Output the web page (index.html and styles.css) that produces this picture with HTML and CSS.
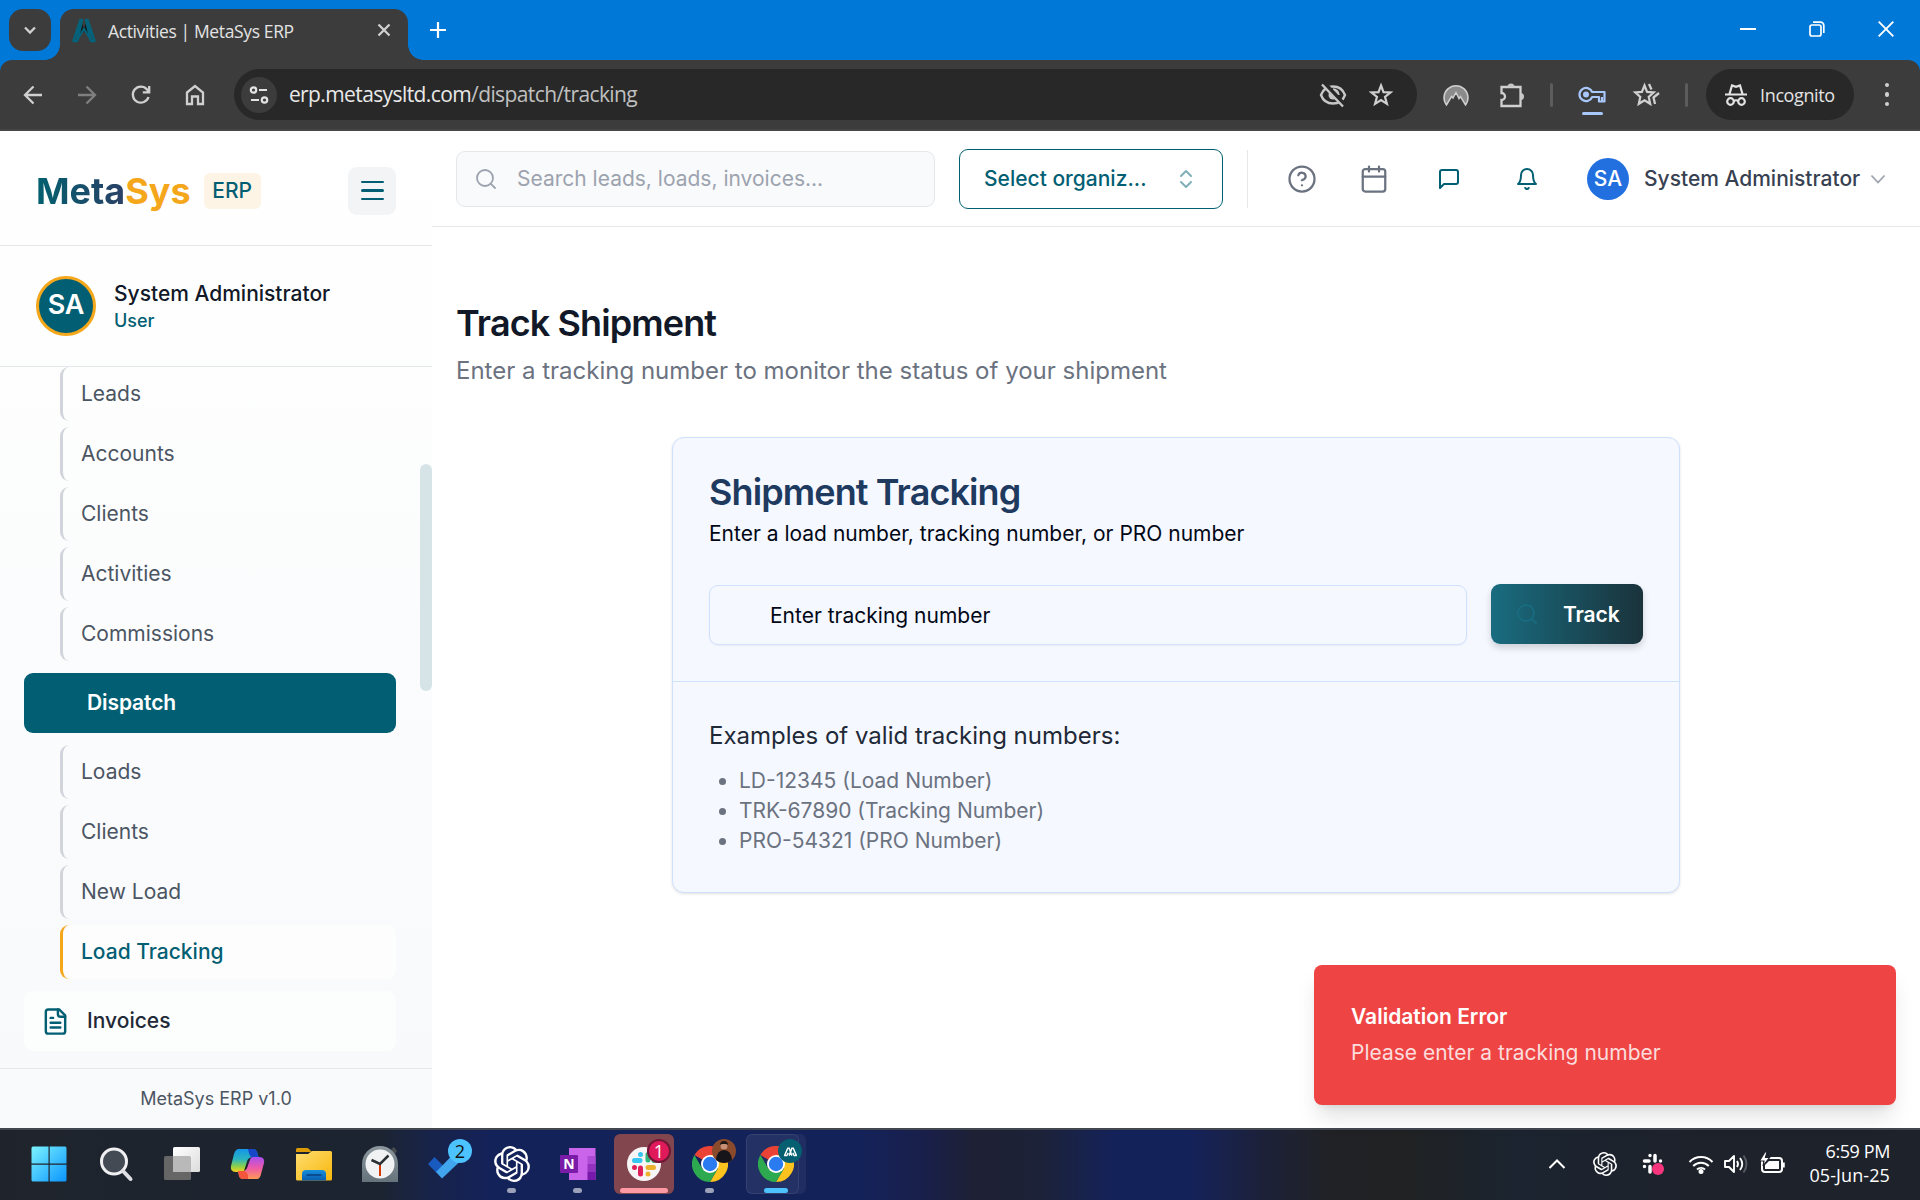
FILE: index.html
```html
<!DOCTYPE html>
<html lang="en">
<head>
<meta charset="utf-8">
<title>Activities | MetaSys ERP</title>
<link rel="stylesheet" href="styles.css">
</head>
<body>
<svg class="defs" width="0" height="0">
  <defs>
    <linearGradient id="win" x1="0" y1="0" x2="1" y2="1"><stop offset="0" stop-color="#7cf3ff"/><stop offset="1" stop-color="#0a95ff"/></linearGradient>
    <linearGradient id="white" x1="0" y1="0" x2="1" y2="1"><stop offset="0" stop-color="#fff"/><stop offset="1" stop-color="#dcdcdc"/></linearGradient>
    <linearGradient id="cpA" x1="0" y1="0" x2="0" y2="1"><stop offset="0" stop-color="#1496e8"/><stop offset=".45" stop-color="#2bb5c0"/><stop offset=".75" stop-color="#8ccf4a"/><stop offset="1" stop-color="#f6d21c"/></linearGradient>
    <linearGradient id="cpB" x1="0" y1="0" x2="0" y2="1"><stop offset="0" stop-color="#a84ff0"/><stop offset=".5" stop-color="#ee5aa8"/><stop offset="1" stop-color="#ff9a55"/></linearGradient>
    <linearGradient id="fold" x1="0" y1="0" x2="1" y2="1"><stop offset="0" stop-color="#ffdd70"/><stop offset="1" stop-color="#f7b70c"/></linearGradient>
    <linearGradient id="foldb" x1="0" y1="0" x2="0" y2="1"><stop offset="0" stop-color="#1590df"/><stop offset="1" stop-color="#0a5cad"/></linearGradient>
    <linearGradient id="clk" x1="0" y1="0" x2="0" y2="1"><stop offset="0" stop-color="#8c979e"/><stop offset="1" stop-color="#66737b"/></linearGradient>
    <symbol id="gpt" viewBox="0 0 24 24"><path fill="currentColor" d="M22.2819 9.8211a5.9847 5.9847 0 0 0-.5157-4.9108 6.0462 6.0462 0 0 0-6.5098-2.9A6.0651 6.0651 0 0 0 4.9807 4.1818a5.9847 5.9847 0 0 0-3.9977 2.9 6.0462 6.0462 0 0 0 .7427 7.0966 5.98 5.98 0 0 0 .511 4.9107 6.051 6.051 0 0 0 6.5146 2.9001A5.9847 5.9847 0 0 0 13.2599 24a6.0557 6.0557 0 0 0 5.7718-4.2058 5.9894 5.9894 0 0 0 3.9977-2.9001 6.0557 6.0557 0 0 0-.7475-7.0729zm-9.022 12.6081a4.4755 4.4755 0 0 1-2.8764-1.0408l.1419-.0804 4.7783-2.7582a.7948.7948 0 0 0 .3927-.6813v-6.7369l2.02 1.1686a.071.071 0 0 1 .038.052v5.5826a4.504 4.504 0 0 1-4.4945 4.4944zm-9.6607-4.1254a4.4708 4.4708 0 0 1-.5346-3.0137l.142.0852 4.783 2.7582a.7712.7712 0 0 0 .7806 0l5.8428-3.3685v2.3324a.0804.0804 0 0 1-.0332.0615L9.74 19.9502a4.4992 4.4992 0 0 1-6.1408-1.6464zM2.3408 7.8956a4.485 4.485 0 0 1 2.3655-1.9728V11.6a.7664.7664 0 0 0 .3879.6765l5.8144 3.3543-2.0201 1.1685a.0757.0757 0 0 1-.071 0l-4.8303-2.7865A4.504 4.504 0 0 1 2.3408 7.872zm16.5963 3.8558L13.1038 8.364 15.1192 7.2a.0757.0757 0 0 1 .071 0l4.8303 2.7913a4.4944 4.4944 0 0 1-.6765 8.1042v-5.6772a.79.79 0 0 0-.407-.667zm2.0107-3.0231l-.142-.0852-4.7735-2.7818a.7759.7759 0 0 0-.7854 0L9.409 9.2297V6.8974a.0662.0662 0 0 1 .0284-.0615l4.8303-2.7866a4.4992 4.4992 0 0 1 6.6802 4.66zM8.3065 12.863l-2.02-1.1638a.0804.0804 0 0 1-.038-.0567V6.0742a4.4992 4.4992 0 0 1 7.3757-3.4537l-.142.0805L8.704 5.459a.7948.7948 0 0 0-.3927.6813zm1.0976-2.3654l2.602-1.4998 2.6069 1.4998v2.9994l-2.5974 1.4997-2.6067-1.4997Z"/></symbol>
    <symbol id="chrome" viewBox="0 0 36 36">
      <path d="M18 18 2.4 9A18 18 0 0 1 33.6 9Z" fill="#ea4335"/>
      <path d="M18 9H33.6A18 18 0 0 1 18 36L25.8 22.5Z" fill="#fcc31e"/>
      <path d="M2.4 9 10.2 22.5 18 27 25.8 22.5 18 36A18 18 0 0 1 2.4 9Z" fill="#2da94f"/>
      <circle cx="18" cy="18" r="9" fill="#fff"/><circle cx="18" cy="18" r="7.2" fill="#2a7af0"/>
    </symbol>
    <symbol id="search" viewBox="0 0 24 24"><g fill="none" stroke="currentColor" stroke-width="1.8" stroke-linecap="round"><circle cx="11" cy="11" r="8"/><path d="m21 21-4.3-4.3"/></g></symbol>
  </defs>
</svg>

<header class="tabstrip">
  <div class="tabsearch"><svg width="16" height="16" viewBox="0 0 16 16"><path d="m3 5.5 5 5 5-5" class="ln" stroke-width="2.4"/></svg></div>
  <div class="tab">
    <svg class="favicon" width="26" height="26" viewBox="0 0 26 26"><path d="m10 2 4 13-3-3-3 6-2 1Z M16 2l-3 8 4 8Z" fill="#111c20"/><path d="M9.500 2h1.500L6 23H2.500ZM15 2h1.500l7 21H20Z" fill="none" stroke="#04637a" stroke-width="2.600" stroke-linejoin="round"/><path d="m5 24 8-13 8 13" fill="none" stroke="#04637a" stroke-width="2"/></svg>
    <span class="tabtitle">Activities | MetaSys ERP</span>
    <svg class="tabclose" width="14" height="14" viewBox="0 0 14 14"><path d="m1.5 1.5 11 11m0-11-11 11" class="ln" stroke-width="2.2"/></svg>
  </div>
  <svg class="newtab" width="16" height="16" viewBox="0 0 16 16"><path d="M8 0v16M0 8h16" stroke="#fff" stroke-width="2.2"/></svg>
  <div class="wincontrols">
    <svg width="16" height="16" viewBox="0 0 16 16"><path d="M0 8h16" stroke="#fff" stroke-width="2"/></svg>
    <svg width="16" height="16" viewBox="0 0 16 16" fill="none" stroke="#fff" stroke-width="1.7"><rect x="1" y="4" width="11" height="11" rx="2"/><path d="M4 1.2h7.5a3.3 3.3 0 0 1 3.3 3.3V12"/></svg>
    <svg width="16" height="16" viewBox="0 0 16 16"><path d="m.7.7 14.6 14.6m0-14.6L.7 15.3" stroke="#fff" stroke-width="1.9"/></svg>
  </div>
</header>

<nav class="toolbar">
  <div class="navbtn"><svg width="20" height="20" viewBox="0 0 20 20"><path d="M19 10H2m8.500-8.500L2 10l8.500 8.500" class="ln"/></svg></div>
  <div class="navbtn dim"><svg width="20" height="20" viewBox="0 0 20 20"><path d="M1 10h17M9.500 1.500 18 10l-8.500 8.500" class="ln"/></svg></div>
  <div class="navbtn"><svg width="20" height="20" viewBox="0 0 20 20"><path d="M17.500 12A8 8 0 1 1 16 4.500l2 2.500M18.200 1v6.300h-6.400" class="ln"/></svg></div>
  <div class="navbtn"><svg width="22" height="22" viewBox="0 0 22 22"><path d="M3 8.500 11 2l8 6.500V20h-5v-7.500H8V20H3Z" class="ln"/></svg></div>
  <div class="omnibox">
    <div class="siteinfo"><svg width="20" height="20" viewBox="0 0 20 20" fill="none" stroke="#e3e3e3" stroke-width="2.200"><circle cx="4.500" cy="5" r="2.700"/><path d="M10 5h8M2 15h8"/><circle cx="15.500" cy="15" r="2.700"/></svg></div>
    <span class="url">erp.metasysltd.com<span class="path">/dispatch/tracking</span></span>
    <div class="omniicon"><svg width="28" height="24" viewBox="0 0 28 24" fill="none" stroke="#c7c7c7" stroke-width="2.400"><path d="M2 12C4 6.500 8.500 3.500 14 3.500S24 6.500 26 12c-2 5.500-6.500 8.500-12 8.500S4 17.500 2 12Z"/><circle cx="14" cy="12" r="4.500" fill="#c7c7c7" stroke="none"/><path d="M14 6.500a5.500 5.500 0 0 1 5.500 5.500"/><path d="M5 .5 26 23" stroke="#282828" stroke-width="5"/><path d="M3 1.500 24 23.500"/></svg></div>
    <div class="omniicon"><svg width="24" height="24" viewBox="0 0 24 24"><path d="m12 2.500 2.500 6.600 7 .4-5.500 4.400 1.900 6.900L12 17l-5.900 3.800L8 13.900 2.500 9.500l7-.4Z" class="ln sh"/></svg></div>
  </div>
  <div class="ext first"><svg width="26" height="22" viewBox="0 0 26 22"><path d="M3.500 21A12 12 0 1 1 22.500 21L17.500 12.500 16 14.500 13 8.500 10 14 8.500 12.500Z" fill="#8b8b8b" stroke="#cfcfcf" stroke-width="1.500"/></svg></div>
  <div class="ext"><svg width="26" height="26" viewBox="0 0 26 26"><path d="M2.500 5h19v19h-19v-6a3.500 3.500 0 0 0 0-7Z" class="ln"/><path d="M8.500 5a3.500 3.500 0 0 1 7 0ZM21.500 11a3.500 3.500 0 0 1 0 7Z" fill="#c7c7c7"/></svg></div>
  <div class="sep"></div>
  <div class="ext key"><svg width="28" height="18" viewBox="0 0 28 18" fill="none" stroke="#a8c7fa" stroke-width="2.200"><path d="M14.200 6H26.500v9.500H21V11h-6.800a6.600 6.600 0 1 1 0-5Z" stroke-linejoin="round"/><circle cx="8" cy="8.500" r="3" fill="#a8c7fa" stroke="none"/><path d="M24 11v4"/></svg></div>
  <div class="ext star2"><svg width="28" height="24" viewBox="0 0 28 24"><path d="m11.500 2.500 2.600 6.400 6.600.5-5 4.400 1.500 7-5.700-3.600-5.700 3.600 1.500-7-5-4.400 6.600-.5Z" class="ln sh"/><path d="m16 1 2.500 5.500M26 10l-5.500 4.500 1.500 6.500" class="ln"/></svg></div>
  <div class="sep two"></div>
  <div class="incog"><svg width="22" height="24" viewBox="0 0 22 24" fill="none" stroke="#e3e3e3" stroke-width="2.200"><path d="M0 11.500h22M4.500 11 7 2.500l4 1.300 4-1.300 2.500 8.500"/><circle cx="5.500" cy="18.500" r="3.300"/><circle cx="16.500" cy="18.500" r="3.300"/><path d="M8.500 18q2.500-1.500 5 0"/></svg><span>Incognito</span></div>
  <div class="dots"><i></i><i></i><i></i></div>
</nav>

<div class="app">
  <aside class="sidebar">
    <div class="brand">
      <span class="logo"><span class="meta">Meta</span><span class="sys">Sys</span></span>
      <span class="erp">ERP</span>
      <button class="burger"><i></i><i></i><i></i></button>
    </div>
    <div class="profile">
      <div class="avatar">SA</div>
      <div><div class="pname">System Administrator</div><div class="prole">User</div></div>
    </div>
    <div class="menu">
      <ul class="sub">
        <li>Leads</li><li>Accounts</li><li>Clients</li><li>Activities</li><li>Commissions</li>
      </ul>
      <div class="group active"><span>Dispatch</span></div>
      <ul class="sub">
        <li>Loads</li><li>Clients</li><li>New Load</li><li class="current">Load Tracking</li>
      </ul>
      <div class="group soft"><svg width="29" height="29" viewBox="0 0 24 24" fill="none" stroke="#025f73" stroke-width="2" stroke-linecap="round" stroke-linejoin="round"><path d="M15 2H6a2 2 0 0 0-2 2v16a2 2 0 0 0 2 2h12a2 2 0 0 0 2-2V7Z"/><path d="M14 2v4a2 2 0 0 0 2 2h4M10 9H8M16 13H8M16 17H8"/></svg><span>Invoices</span></div>
      <div class="thumb"></div>
    </div>
    <div class="version">MetaSys ERP v1.0</div>
  </aside>

  <main class="main">
    <div class="topbar">
      <div class="searchbox"><svg width="24" height="24"><use href="#search"/></svg><span>Search leads, loads, invoices...</span></div>
      <div class="orgselect"><span>Select organiz...</span><svg width="24" height="24" viewBox="0 0 24 24" fill="none" stroke="#80afb9" stroke-width="2" stroke-linecap="round" stroke-linejoin="round"><path d="m7 15 5 5 5-5M7 9l5-5 5 5"/></svg></div>
      <div class="vline"></div>
      <div class="hicon"><svg width="30" height="30" viewBox="0 0 24 24" class="grey"><circle cx="12" cy="12" r="10"/><path d="M9.090 9a3 3 0 0 1 5.830 1c0 2-3 3-3 3M12 17h.01"/></svg></div>
      <div class="hicon"><svg width="30" height="30" viewBox="0 0 24 24" class="grey"><path d="M8 2v4M16 2v4M3 10h18"/><rect x="3" y="4" width="18" height="18" rx="2"/></svg></div>
      <div class="hicon wide"><svg width="24" height="24" viewBox="0 0 24 24" class="teal"><path d="M21 15a2 2 0 0 1-2 2H7l-4 4V5a2 2 0 0 1 2-2h14a2 2 0 0 1 2 2z"/></svg></div>
      <div class="hicon wide"><svg width="24" height="24" viewBox="0 0 24 24" class="teal"><path d="M6 8a6 6 0 0 1 12 0c0 7 3 9 3 9H3s3-2 3-9M10.300 21a1.940 1.940 0 0 0 3.400 0"/></svg></div>
      <div class="useravatar">SA</div>
      <span class="username">System Administrator</span>
      <svg class="chev" width="18" height="18" viewBox="0 0 18 18"><path d="m2.500 5.500 6.500 7 6.500-7" fill="none" stroke="#9ca3af" stroke-width="1.800"/></svg>
    </div>

    <div class="content">
      <h1>Track Shipment</h1>
      <p class="lead">Enter a tracking number to monitor the status of your shipment</p>
      <section class="card">
        <div class="cardtop">
          <h2>Shipment Tracking</h2>
          <p>Enter a load number, tracking number, or PRO number</p>
          <div class="form">
            <div class="field">Enter tracking number</div>
            <button class="track"><svg width="24" height="24"><use href="#search"/></svg><span>Track</span></button>
          </div>
        </div>
        <div class="cardbottom">
          <h3>Examples of valid tracking numbers:</h3>
          <ul><li>LD-12345 (Load Number)</li><li>TRK-67890 (Tracking Number)</li><li>PRO-54321 (PRO Number)</li></ul>
        </div>
      </section>
    </div>
    <div class="toast"><b>Validation Error</b><span>Please enter a tracking number</span></div>
  </main>
</div>

<footer class="taskbar">
  <div class="app-ic start"><svg width="36" height="36" viewBox="0 0 36 36"><path fill="url(#win)" d="M2 .5h15.500V17.500H.5V2Q.5.5 2 .5ZM18.700.5H34q1.500 0 1.500 1.500V17.500H18.700ZM.5 18.700h17v16.800H2Q.5 35.500.5 34ZM18.700 18.700h16.800V34q0 1.500-1.500 1.500H18.700Z"/></svg></div>
  <div class="app-ic"><svg width="36" height="36" viewBox="0 0 36 36"><circle cx="16" cy="15.500" r="12.500" fill="#444a54" stroke="#f0f0f2" stroke-width="3"/><path d="m25 25 7.500 8" stroke="#dfe0e6" stroke-width="4" stroke-linecap="round"/></svg></div>
  <div class="app-ic"><svg width="36" height="36" viewBox="0 0 36 36"><rect y="10" width="27" height="24" rx="1.500" fill="#666"/><rect x="9" y="1" width="27" height="25" rx="1.500" fill="url(#white)"/><path d="M9 10h16.500q1.500 0 1.500 1.500V26H9Z" fill="#b9b9b9"/></svg></div>
  <div class="app-ic"><svg width="36" height="36" viewBox="0 0 36 36"><path d="M9 3h14q3 0 4 3l1.500 5H22q-2.500 0-3.500 3l-3 10q-1 2-3 2H6q-6 0-5-6L4 8q1.500-5 5-5Z" fill="url(#cpA)"/><path d="M18 3h5q3 0 4 3l1.500 5H22q-2 0-3-4Z" fill="#1746c8"/><path d="M27 33H13q-3 0-4-3l-1-5h5q2.500 0 3.500-3l3.500-9q1-2 3-2h6q6 0 5 6L31 28q-1 5-4 5Z" fill="url(#cpB)"/><path d="M18 33h-5q-3 0-4-3l-1-5h6q2 0 4 4Z" fill="#f4553d"/><path d="m17.500 14-3.500 11q2-1 3-3l3.500-10q-2 0-3 2Z" fill="#1e2430"/></svg></div>
  <div class="app-ic"><svg width="36" height="36" viewBox="0 0 36 36"><path d="M0 3.500Q0 2 1.500 2H11q1.500 0 3 2l1.500 2H0Z" fill="#dc9b05"/><path d="M0 8h12l4-3h18.500Q36 5 36 6.500V33q0 1.500-1.500 1.500h-33Q0 34.500 0 33Z" fill="url(#fold)"/><path d="M6 34.500V28q0-4 4-4h16q4 0 4 4v6.500Z" fill="url(#foldb)"/><path d="M10.500 29h15" stroke="#084c91" stroke-width="2"/></svg></div>
  <div class="app-ic"><svg width="36" height="36" viewBox="0 0 36 36"><path d="m29 3 3-2 3 4-2 3Z" fill="#484b4d"/><path d="M0 36V18a18 18 0 0 1 36 0v18Z" fill="url(#clk)"/><circle cx="18" cy="18" r="14.500" fill="#f1f2f3"/><path d="M18 18v12" stroke="#d83b01" stroke-width="2"/><path d="m9.500 14 8.500 4 8.500-8.500" fill="none" stroke="#2b3035" stroke-width="2.500"/></svg></div>
  <div class="app-ic"><svg width="36" height="36" viewBox="0 0 36 36"><path d="m0 18 6.500-7 9 9-7 7Z" fill="#185abd"/><path d="m8 26 18-18.500 7 7-19 18Z" fill="#41a5ee"/></svg><b class="badge blue">2</b></div>
  <div class="app-ic"><svg class="w" width="36" height="36"><use href="#gpt"/></svg><u></u></div>
  <div class="app-ic"><svg width="36" height="36" viewBox="0 0 36 36"><path d="M9 2h26.500v32H9Z" fill="#ca64ea"/><path d="M27.500 10h8v8h-8Z" fill="#ae4bd5"/><path d="M27.500 18h8v8h-8Z" fill="#9332bf"/><path d="M27.500 26h8v8h-8Z" fill="#7719aa"/><rect x="0" y="9" width="18" height="18" rx="1" fill="#7a1ca8"/><text x="9" y="23" class="note">N</text></svg><u></u></div>
  <div class="app-ic slack"><svg width="36" height="36" viewBox="0 0 36 36"><circle cx="18" cy="18" r="17" fill="#f7f4f6"/><g stroke-width="5" stroke-linecap="round"><path d="M8.500 14.500H14M14.500 8.500h0" stroke="#36c5f0"/><path d="M22 8.500V14M28 14.500h0" stroke="#2eb67d"/><path d="M22 21.500h5.500M22 28h0" stroke="#ecb22e"/><path d="M14.500 22v6M8.500 21.500h0" stroke="#e01e5a"/></g></svg><b class="badge red">1</b><u></u></div>
  <div class="app-ic"><svg width="36" height="36"><use href="#chrome"/></svg><b class="badge photo"><svg width="24" height="24" viewBox="0 0 24 24"><circle cx="12" cy="12" r="12" fill="#8a4a2c"/><path d="M4 21q1-10 8-10t8 10a12 12 0 0 1-16 0Z" fill="#17151a"/><circle cx="12" cy="7" r="3.500" fill="#c79076"/><path d="M8 6q0-4 4-4t4 4l-2-1h-4Z" fill="#201815"/></svg></b><u></u></div>
  <div class="app-ic open"><svg width="36" height="36"><use href="#chrome"/></svg><b class="badge ms"><svg width="15" height="11" viewBox="0 0 16 12"><path d="M1.500 10.500 5 2.500h1.500l3 8M6.500 10.500l3-8H11l3.500 8M1 10.500h3l1.500-3M15 10.500h-3l-1.500-3" fill="none" stroke="#fff" stroke-width="1.600"/></svg></b><u></u></div>

  <div class="tray">
    <div class="t48"><svg width="18" height="12" viewBox="0 0 18 12"><path d="m1.500 10 7.500-7.500 7.500 7.500" fill="none" stroke="#fff" stroke-width="2"/></svg></div>
    <div class="t48"><svg class="w" width="24" height="24"><use href="#gpt"/></svg></div>
    <div class="t48"><svg width="24" height="24" viewBox="0 0 24 24"><g stroke="#fff" stroke-width="3.500" stroke-linecap="round"><path d="M3.500 9H8M9 3.500h0M14 3.500V9M19.500 9h0M9 14.500V20M3.500 14.500h0M15 15h4"/></g><circle cx="17" cy="17" r="6" fill="#f7357d"/></svg></div>
    <div class="twifi"><svg width="26" height="20" viewBox="0 0 26 20" fill="none" stroke="#fff" stroke-width="2"><path d="M1.500 8a16 16 0 0 1 23 0M5.200 12a11 11 0 0 1 15.600 0M9 15.500a6 6 0 0 1 8 0"/><circle cx="13" cy="17.500" r="1.500" fill="#fff"/></svg></div>
    <div class="tspk"><svg width="26" height="20" viewBox="0 0 26 20" fill="none" stroke="#fff" stroke-width="1.900"><path d="M2 7h4l5-5v16l-5-5H2Z" stroke-linejoin="round"/><path d="M14 7q2 3 0 6M17 4q4.500 6 0 12"/><path d="M20.500 1.500q6 8.500 0 17" stroke="#565b63"/></svg></div>
    <div class="tbat"><svg width="26" height="22" viewBox="0 0 26 22"><rect x="2" y="5" width="20" height="14" rx="3" fill="none" stroke="#fff" stroke-width="2"/><path d="M9 8h10v8H5v-4Z" fill="#fff"/><path d="M23.500 9.500v5" stroke="#fff" stroke-width="2.500"/><path d="M5-1-.5 8H4l-1 5 6.500-8.500H5.500L7-1Z" fill="#fff" stroke="#1e222b" stroke-width="1.200"/></svg></div>
    <div class="clock"><div class="time">6:59 PM</div><div>05-Jun-25</div></div>
  </div>
</footer>
</body>
</html>
```
FILE: styles.css
```css
* { box-sizing: border-box; }
body { margin: 0; width: 1920px; height: 1200px; overflow: hidden; display: flex; flex-direction: column; background: linear-gradient(#0078d7 80px, #fff 80px); font-family: Inter, sans-serif; white-space: nowrap; }
svg { display: block; flex: none; overflow: visible; }
.defs { position: absolute; }
ul { list-style: none; margin: 0; padding: 0; }
h1, h2, h3, p { margin: 0; }
button { border: 0; padding: 0; font: inherit; }
.ln { fill: none; stroke: #d0d0d0; stroke-width: 2.3; }
.sh { stroke-width: 2.2; }

/* Browser window */
.tabstrip { flex: none; height: 60px; background: #0078d7; display: flex; padding: 9px 0 0 9px; font-family: "Open Sans", sans-serif; }
.tabsearch { width: 42px; height: 42px; border-radius: 14px; background: #3c3c3c; display: flex; align-items: center; justify-content: center; }
.tab { position: relative; margin-left: 9px; width: 348px; height: 51px; background: #3c3c3c; border-radius: 14px 14px 0 0; display: flex; align-items: center; padding: 0 17px 5px 11px; }
.tab::before, .tab::after { content: ""; position: absolute; bottom: 0; width: 15px; height: 15px; }
.tab::before { left: -15px; background: radial-gradient(circle at 0 0, transparent 14.5px, #3c3c3c 15px); }
.tab::after { right: -15px; background: radial-gradient(circle at 100% 0, transparent 14.5px, #3c3c3c 15px); }
.favicon { margin-top: -3px; }
.tabtitle { margin: -2px 0 0 11px; font-size: 17.5px; letter-spacing: -.37px; color: #e3e3e3; }
.tabclose { margin: -4px 0 0 auto; }
.newtab { margin: 13px 0 0 22px; }
.wincontrols { margin: 12px 26px 0 auto; display: flex; gap: 53px; }
.toolbar { flex: none; height: 71px; background: #3c3c3c; border-bottom: 2px solid #464646; border-radius: 12px 12px 0 0; display: flex; align-items: center; padding-left: 6px; font-family: "Open Sans", sans-serif; }
.navbtn { width: 54px; display: flex; justify-content: center; }
.dim { opacity: .45; }
.omnibox { margin-left: 12px; width: 1184px; height: 51px; border-radius: 26px; background: #282828; display: flex; align-items: center; padding: 0 12px 0 7px; }
.siteinfo { width: 36px; height: 36px; border-radius: 50%; background: #3c3c3c; display: flex; align-items: center; justify-content: center; }
.url { margin: -1px auto 0 12px; font-size: 21px; letter-spacing: -.6px; color: #e8e8e8; }
.path { color: #c0c0c0; }
.omniicon { width: 48px; display: flex; justify-content: center; }
.ext { width: 56px; display: flex; justify-content: center; }
.first { margin-left: 11px; }
.sep { width: 3px; height: 24px; margin: 0 11px 0 10px; border-radius: 2px; background: #5c5c5c; }
.sep.two { margin: 0 18px 0 11px; }
.key { position: relative; }
.key::after { content: ""; position: absolute; left: 18px; top: 26px; width: 21px; height: 3px; border-radius: 2px; background: #a8c7fa; }
.star2 { width: 54px; }
.incog { width: 148px; height: 51px; border-radius: 26px; background: #282828; color: #e3e3e3; font-size: 18px; letter-spacing: -.4px; display: flex; align-items: center; gap: 13px; padding-left: 19px; }
.dots { width: 66px; display: flex; flex-direction: column; align-items: center; gap: 5px; }
.dots i { width: 4.5px; height: 4.5px; border-radius: 50%; background: #d0d0d0; }

/* Application */
.app { flex: none; height: 997px; display: flex; background: #fff; }
.sidebar { width: 432px; display: flex; flex-direction: column; background: linear-gradient(#fff, #f8f9fb); }
.brand { height: 115px; border-bottom: 1px solid #e5e7eb; display: flex; align-items: center; padding: 5px 36px 0; }
.logo { font-size: 36px; font-weight: 700; line-height: 54px; }
.meta { background: linear-gradient(90deg, #02606f, #2a4066); background-clip: text; -webkit-background-clip: text; color: transparent; }
.sys { color: #f5a71c; }
.erp { margin-left: 13px; height: 36px; width: 57px; border-radius: 6px; background: #fef4e6; color: #025f73; font-size: 21px; font-weight: 500; line-height: 36px; text-align: center; }
.burger { margin-left: auto; width: 48px; height: 48px; border-radius: 9px; background: #f3f4f6; display: flex; flex-direction: column; align-items: center; justify-content: center; gap: 6px; }
.burger i { width: 23px; height: 2.5px; border-radius: 2px; background: #025f73; }
.profile { height: 121px; border-bottom: 1px solid #e5e7eb; display: flex; align-items: center; gap: 18px; padding-left: 36px; }
.avatar { width: 60px; height: 60px; border-radius: 50%; background: #025f73; border: 3px solid #f5a71c; color: #fff; font-size: 27px; font-weight: 600; letter-spacing: -.3px; line-height: 52px; text-align: center; }
.pname { font-size: 21px; font-weight: 500; line-height: 30px; color: #111827; }
.prole { font-size: 18px; font-weight: 500; line-height: 24px; color: #025f73; }
.menu { position: relative; height: 701px; overflow: hidden; padding: 0 36px 0 24px; }
.sub { display: flex; flex-direction: column; gap: 6px; padding-left: 36px; }
.sub li { height: 54px; border-left: 3px solid #d1d5db; border-radius: 9px; padding-left: 18px; font-size: 21px; line-height: 54px; color: #4b5563; }
.sub .current { border-color: #f5a71c; background: #fdfdfd; color: #025f73; font-weight: 500; }
.group { height: 60px; margin: 12px 0; border-radius: 9px; display: flex; align-items: center; font-size: 21px; }
.active { background: #025f73; color: #fff; font-weight: 600; padding-left: 63px; letter-spacing: -.1px; }
.soft { background: #fcfdfd; color: #1f2937; font-weight: 500; padding-left: 17px; gap: 17px; }
.group span { margin-top: -1px; }
.thumb { position: absolute; right: 0; top: 97px; width: 12px; height: 227px; border-radius: 6px; background: #d6e4e8; }
.version { height: 60px; border-top: 1px solid #e5e7eb; background: #f9fafb; text-align: center; font-size: 18px; line-height: 60px; color: #4b5563; }

.main { position: relative; flex: 1; }
.topbar { height: 96px; border-bottom: 1px solid #e5e7eb; display: flex; align-items: center; padding-left: 24px; }
.searchbox { width: 479px; height: 56px; border: 1px solid #e5e7eb; border-radius: 9px; background: #f9fafb; display: flex; align-items: center; gap: 19px; padding-left: 17px; font-size: 21px; color: #9ca3af; }
.orgselect { margin-left: 24px; width: 264px; height: 60px; border: 1.5px solid #025f73; border-radius: 9px; display: flex; align-items: center; justify-content: space-between; padding: 0 24px; font-size: 21px; font-weight: 500; color: #025f73; }
.vline { margin-left: 24px; width: 1px; height: 58px; margin-right: 18px; background: #e5e7eb; }
.hicon { width: 72px; display: flex; justify-content: center; }
.wide { width: 78px; }
.grey, .teal { fill: none; stroke-linecap: round; stroke-linejoin: round; stroke: #6b7280; stroke-width: 1.8; }
.teal { stroke: #025f73; stroke-width: 2; }
.useravatar { margin-left: 21px; width: 42px; height: 42px; border-radius: 50%; background: #2270e0; color: #fff; font-size: 21px; font-weight: 500; text-align: center; line-height: 42px; }
.username { margin-left: 15px; font-size: 21px; font-weight: 500; color: #374151; }
.chev { margin: 0 33px 0 auto; }

.content { padding: 69px 0 0 24px; }
h1 { font-size: 36px; font-weight: 600; line-height: 54px; letter-spacing: -.9px; color: #111827; }
.lead { margin-top: 3px; font-size: 24px; line-height: 36px; color: #6b7280; }
.card { margin: 48px 0 0 216px; width: 1008px; height: 456px; border: 1px solid #cfe1fd; border-radius: 12px; background: #f5f8ff; box-shadow: 0 1px 3px rgba(0,0,0,.12); }
.cardtop { height: 244px; padding: 36px; border-bottom: 1px solid #cfe1fd; }
h2 { font-size: 36px; font-weight: 600; line-height: 36px; letter-spacing: -.9px; color: #1e3a5f; }
.cardtop p { margin-top: 9px; font-size: 21px; line-height: 30px; color: #020817; }
.form { margin-top: 34px; display: flex; gap: 24px; }
.field { margin-top: 2px; width: 758px; height: 60px; border: 1px solid #cfe1fd; border-radius: 9px; box-shadow: 0 1px 2px rgba(0,0,0,.05); padding-left: 60px; font-size: 21px; line-height: 60px; color: #020817; }
.track { margin-top: 1px; width: 152px; height: 60px; border-radius: 9px; background: linear-gradient(90deg, #196c80, #1a333b); box-shadow: 0 4px 7px rgba(0,0,0,.16); color: #fff; font-size: 21px; font-weight: 600; letter-spacing: -.1px; display: flex; align-items: center; gap: 24px; padding-left: 24px; }
.track svg { color: #196c80; }
.cardbottom { padding: 36px; }
h3 { font-size: 24px; font-weight: 400; line-height: 36px; color: #1f2937; }
.cardbottom ul { margin-top: 12px; padding-left: 30px; list-style: disc; }
.cardbottom li { font-size: 21px; line-height: 30px; color: #6b7280; }
.toast { position: absolute; right: 24px; bottom: 23px; width: 582px; height: 140px; border-radius: 8px; background: #ef4444; box-shadow: 0 15px 22px -4px rgba(0,0,0,.12), 0 6px 9px -6px rgba(0,0,0,.12); padding: 37px; display: flex; flex-direction: column; gap: 6px; color: #fff; font-size: 21px; line-height: 30px; }
.toast b { font-weight: 600; }
.toast span { color: #fbdcdc; }

/* Taskbar */
.taskbar { height: 72px; border-top: 2px solid #42464f; background: linear-gradient(90deg, #1f242c 0, #1c2431 380px, #172349 430px, #14225a 490px, #14225a 860px, #191f48 930px, #1e2034 975px, #1c2238 1040px, #14225a 1115px, #14225a 1190px, #1c213a 1260px, #212225 1330px, #202224 1410px, #1b2430 1520px, #1e222b 1700px); display: flex; padding: 4px 0 0 16px; }
.app-ic { position: relative; width: 66px; height: 60px; display: flex; align-items: center; justify-content: center; }
.start { margin-right: 1px; }
.app-ic u { position: absolute; left: 28px; bottom: 1px; width: 9px; height: 5px; border-radius: 3px; background: #9aa1b8; }
.badge { position: absolute; left: 34px; top: 5px; width: 24px; height: 24px; border-radius: 50%; font: 18px/24px "Open Sans", sans-serif; text-align: center; }
.blue { left: 35px; background: #4cc2ff; color: #111; }
.red { left: 36px; background: #e0195a; color: #fff; box-shadow: inset 0 0 0 2px #6b1a36; }
.photo { left: 35px; }
.ms { left: 35px; background: #045f70; display: flex; align-items: center; justify-content: center; }
.w { color: #fff; }
.note { font: bold 14px "Open Sans", sans-serif; fill: #fff; text-anchor: middle; }
.slack::before, .open::before { content: ""; position: absolute; z-index: -1; inset: 0 3px; border-radius: 6px; background: #81464e; }
.slack, .open { z-index: 0; }
.slack u { left: 9px; width: 48px; background: #ff99a4; }
.open::before { right: 10px; background: rgba(255,255,255,.07); border: 1px solid rgba(255,255,255,.08); box-shadow: 7px 0 0 0 rgba(255,255,255,.05); }
.open u { left: 21px; width: 24px; background: #4cc2ff; }
.tray { margin-left: auto; margin-right: 30px; height: 60px; display: flex; align-items: center; }
.tray > div { display: flex; justify-content: center; }
.t48 { width: 48px; }
.twifi { width: 38px; margin-left: 5px; }
.tspk { width: 32px; }
.tbat { width: 42px; }
.tray .clock { width: 96px; display: block; margin-top: -2px; text-align: right; color: #fff; font: 18px/24px "Open Sans", sans-serif; letter-spacing: .1px; }
.clock .time { letter-spacing: -.4px; }
```
